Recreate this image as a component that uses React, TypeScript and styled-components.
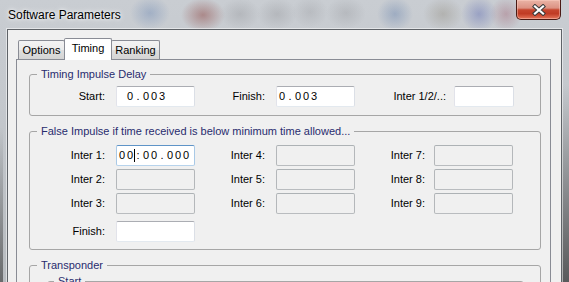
import React from "react";
import styled, { createGlobalStyle } from "styled-components";

const GlobalStyle = createGlobalStyle`
  html, body { margin: 0; padding: 0; background: #f0f0f0; }
  body { font-family: "Liberation Sans", Arial, sans-serif; }
  * { box-sizing: border-box; }
`;

const UI_FONT = `"Liberation Sans", Arial, sans-serif`;

const Window = styled.div`
  width: 569px;
  height: 282px;
  overflow: hidden;
  display: flex;
  flex-direction: column;
  background:
    linear-gradient(180deg, rgba(0, 0, 0, 0) 30%, rgba(25, 25, 25, 0.6) 100%) right top / 7px 100% no-repeat,
    linear-gradient(180deg, rgba(0, 0, 0, 0) 45%, rgba(40, 40, 40, 0.55) 100%) left top / 3px 100% no-repeat,
    radial-gradient(20px 17px at 150px 13px, rgba(80, 115, 170, 0.32), rgba(80, 115, 170, 0)),
    radial-gradient(22px 17px at 203px 15px, rgba(130, 45, 40, 0.42), rgba(130, 45, 40, 0)),
    radial-gradient(20px 16px at 240px 14px, rgba(110, 110, 115, 0.22), rgba(110, 110, 115, 0)),
    radial-gradient(20px 16px at 277px 14px, rgba(110, 110, 115, 0.22), rgba(110, 110, 115, 0)),
    radial-gradient(18px 16px at 310px 12px, rgba(120, 120, 125, 0.2), rgba(120, 120, 125, 0)),
    radial-gradient(20px 16px at 346px 13px, rgba(110, 110, 115, 0.2), rgba(110, 110, 115, 0)),
    radial-gradient(18px 17px at 395px 14px, rgba(70, 105, 160, 0.32), rgba(70, 105, 160, 0)),
    radial-gradient(20px 17px at 443px 14px, rgba(120, 110, 90, 0.28), rgba(120, 110, 90, 0)),
    radial-gradient(18px 18px at 479px 14px, rgba(70, 85, 170, 0.36), rgba(70, 85, 170, 0)),
    radial-gradient(16px 17px at 506px 14px, rgba(150, 70, 90, 0.32), rgba(150, 70, 90, 0)),
    linear-gradient(180deg, #c9cdd2 0%, #c4c8cd 35%, #b7bbbf 100%);
`;

const TitleBar = styled.div`
  flex: none;
  height: 29px;
  display: flex;
  align-items: flex-start;
  justify-content: space-between;
  padding: 0 8px;
`;

const Title = styled.div`
  margin-top: 7px;
  font: 12px/16px ${UI_FONT};
  color: #000;
  text-shadow: 0 0 6px #fff, 0 0 3px rgba(255, 255, 255, 0.9);
`;

const CloseButton = styled.div`
  width: 45px;
  height: 20px;
  display: flex;
  align-items: center;
  justify-content: center;
  border: 1px solid #4a1a14;
  border-top: none;
  border-radius: 0 0 5px 5px;
  background: linear-gradient(
    180deg,
    #eab4a6 0%,
    #dc9283 42%,
    #c6462e 52%,
    #c03b24 72%,
    #e5765b 100%
  );
  box-shadow: inset 0 0 0 1px rgba(255, 210, 200, 0.45);
`;

const Client = styled.div`
  flex: 1;
  min-height: 0;
  display: flex;
  flex-direction: column;
  margin: 0 7px;
  border: 1px solid #5f6368;
  border-bottom: none;
  background: #f0f0f0;
  padding: 8px 10px 0 8px;
  box-shadow: 0 0 0 1px rgba(255, 255, 255, 0.5);
`;

const TabStrip = styled.div`
  flex: none;
  height: 21px;
  display: flex;
  align-items: flex-end;
  padding-left: 2px;
  position: relative;
  z-index: 1;
`;

const Tab = styled.div<{ $active?: boolean; $w: number; $first?: boolean }>`
  width: ${(p) => p.$w}px;
  height: ${(p) => (p.$active ? 22 : 19)}px;
  margin-left: ${(p) => (p.$first ? 0 : -1)}px;
  margin-bottom: ${(p) => (p.$active ? -1 : 0)}px;
  position: relative;
  z-index: ${(p) => (p.$active ? 2 : 1)};
  display: flex;
  align-items: center;
  justify-content: center;
  padding-bottom: ${(p) => (p.$active ? 2 : 0)}px;
  border: 1px solid #898c95;
  border-bottom: none;
  border-radius: 2px 2px 0 0;
  background: ${(p) =>
    p.$active
      ? "#ffffff"
      : "linear-gradient(180deg, #f3f3f3 0%, #ebebeb 50%, #dedede 52%, #d4d4d4 100%)"};
  font: 11px/13px ${UI_FONT};
  color: #000;
`;

const Panel = styled.div`
  flex: 1;
  min-height: 0;
  overflow: hidden;
  border: 1px solid #898c95;
  border-bottom: none;
  background: #f0f0f0;
  padding: 8px 9px 0 12px;
`;

const Group = styled.fieldset<{ $mt?: number }>`
  margin: ${(p) => p.$mt ?? 0}px 0 0;
  padding: 0;
  min-width: 0;
  border: 1px solid #a6a6a6;
  border-radius: 3px;
`;

const Legend = styled.legend<{ $ml?: number }>`
  margin-left: ${(p) => p.$ml ?? 7}px;
  padding: 0 4px;
  font: 11px/13px ${UI_FONT};
  color: #282c6e;
  white-space: nowrap;
`;

const GroupBody = styled.div<{ $pt: number; $pb: number; $pl?: number; $pr?: number }>`
  padding: ${(p) => p.$pt}px ${(p) => p.$pr ?? 0}px ${(p) => p.$pb}px ${(p) => p.$pl ?? 0}px;
`;

const FieldGrid = styled.div<{ $cols: string; $mt?: number }>`
  display: grid;
  grid-template-columns: ${(p) => p.$cols};
  grid-auto-rows: 21px;
  row-gap: 3px;
  align-items: center;
  margin-top: ${(p) => p.$mt ?? 0}px;
`;

const Label = styled.span<{ $pr: number }>`
  text-align: right;
  padding-right: ${(p) => p.$pr}px;
  font: 11px/13px ${UI_FONT};
  color: #000;
  white-space: nowrap;
`;

type BoxState = "normal" | "focus" | "disabled";

const boxBorder: Record<BoxState, string> = {
  normal: "#abadb3 #dbdfe6 #e3e9ef #e2e3ea",
  focus: "#5f94c7 #a9c9e6 #b7d3ec #a9c9e6",
  disabled: "#adb2b5 #b4b7ba #b9bcbf #b4b7ba",
};

const Box = styled.div<{ $state: BoxState }>`
  height: 21px;
  display: flex;
  align-items: center;
  padding: 0 1px;
  border: 1px solid;
  border-color: ${(p) => boxBorder[p.$state]};
  border-radius: 2px;
  background: ${(p) => (p.$state === "disabled" ? "#f0f0f0" : "#ffffff")};
  overflow: hidden;
`;

const Cell = styled.span`
  display: inline-block;
  width: 8px;
  text-align: center;
  white-space: pre;
  font: 11px/13px ${UI_FONT};
  color: #000;
`;

const Caret = styled.span`
  display: inline-block;
  width: 1px;
  height: 13px;
  margin-right: -1px;
  background: #000;
  position: relative;
  z-index: 1;
`;

const InnerWrap = styled.div`
  padding: 3px 16px 0 17px;
`;

type FieldDef = { label: string; value?: string; state: BoxState; caret?: number; pr: number };

const Field: React.FC<{ f: FieldDef }> = ({ f }) => {
  const chars = (f.value ?? "").split("");
  return (
    <>
      <Label $pr={f.pr}>{f.label}</Label>
      <Box $state={f.state}>
        {chars.map((c, i) => (
          <React.Fragment key={i}>
            {f.caret === i && <Caret />}
            <Cell>{c}</Cell>
          </React.Fragment>
        ))}
      </Box>
    </>
  );
};

const delayFields: FieldDef[] = [
  { label: "Start:", value: " 0.003", state: "normal", pr: 11 },
  { label: "Finish:", value: "0.003", state: "normal", pr: 11 },
  { label: "Inter 1/2/..:", value: "", state: "normal", pr: 8 },
];

const interRows: FieldDef[][] = [
  [
    { label: "Inter 1:", value: "00:00.000", state: "focus", caret: 2, pr: 11 },
    { label: "Inter 4:", state: "disabled", pr: 11 },
    { label: "Inter 7:", state: "disabled", pr: 9 },
  ],
  [
    { label: "Inter 2:", state: "disabled", pr: 11 },
    { label: "Inter 5:", state: "disabled", pr: 11 },
    { label: "Inter 8:", state: "disabled", pr: 9 },
  ],
  [
    { label: "Inter 3:", state: "disabled", pr: 11 },
    { label: "Inter 6:", state: "disabled", pr: 11 },
    { label: "Inter 9:", state: "disabled", pr: 9 },
  ],
];

const CloseIcon = () => (
  <svg width="14" height="12" viewBox="0 0 14 12">
    <path d="M3 2.5 L11 9.5 M11 2.5 L3 9.5" stroke="#3b3b3b" strokeWidth="4.2" strokeLinecap="square" />
    <path d="M3 2.5 L11 9.5 M11 2.5 L3 9.5" stroke="#ffffff" strokeWidth="2.2" strokeLinecap="square" />
  </svg>
);

export default function App() {
  return (
    <>
      <GlobalStyle />
      <Window>
        <TitleBar>
          <Title>Software Parameters</Title>
          <CloseButton>
            <CloseIcon />
          </CloseButton>
        </TitleBar>
        <Client>
          <TabStrip>
            <Tab $w={47} $first>Options</Tab>
            <Tab $w={48} $active>Timing</Tab>
            <Tab $w={49}>Ranking</Tab>
          </TabStrip>
          <Panel>
            <Group>
              <Legend>Timing Impulse Delay</Legend>
              <GroupBody $pt={5} $pb={8}>
                <FieldGrid $cols="86px 79px 81px 79px 99px 60px">
                  {delayFields.map((f) => (
                    <Field key={f.label} f={f} />
                  ))}
                </FieldGrid>
              </GroupBody>
            </Group>
            <Group $mt={9}>
              <Legend>False Impulse if time received is below minimum time allowed...</Legend>
              <GroupBody $pt={7} $pb={7}>
                <FieldGrid $cols="86px 79px 81px 79px 79px 79px">
                  {interRows.flat().map((f) => (
                    <Field key={f.label} f={f} />
                  ))}
                </FieldGrid>
                <FieldGrid $cols="86px 79px" $mt={7}>
                  <Field f={{ label: "Finish:", value: "", state: "normal", pr: 11 }} />
                </FieldGrid>
              </GroupBody>
            </Group>
            <Group $mt={9}>
              <Legend>Transponder</Legend>
              <InnerWrap>
                <Group>
                  <Legend $ml={6}>Start</Legend>
                  <GroupBody $pt={30} $pb={10} />
                </Group>
              </InnerWrap>
            </Group>
          </Panel>
        </Client>
      </Window>
    </>
  );
}
